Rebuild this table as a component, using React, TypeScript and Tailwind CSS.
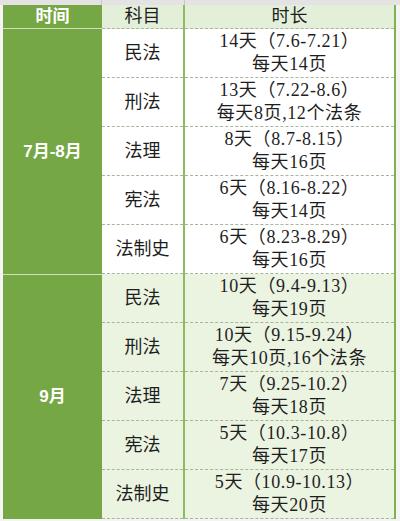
import React from "react";

interface Row {
  subject: string;
  range: string;
  pages: string;
}

interface Group {
  label: string;
  tint: string;
  rows: Row[];
}

const groups: Group[] = [
  {
    label: "7月-8月",
    tint: "bg-white",
    rows: [
      { subject: "民法", range: "14天（7.6-7.21）", pages: "每天14页" },
      { subject: "刑法", range: "13天（7.22-8.6）", pages: "每天8页,12个法条" },
      { subject: "法理", range: "8天（8.7-8.15）", pages: "每天16页" },
      { subject: "宪法", range: "6天（8.16-8.22）", pages: "每天14页" },
      { subject: "法制史", range: "6天（8.23-8.29）", pages: "每天16页" },
    ],
  },
  {
    label: "9月",
    tint: "bg-[#ebf3e1]",
    rows: [
      { subject: "民法", range: "10天（9.4-9.13）", pages: "每天19页" },
      { subject: "刑法", range: "10天（9.15-9.24）", pages: "每天10页,16个法条" },
      { subject: "法理", range: "7天（9.25-10.2）", pages: "每天18页" },
      { subject: "宪法", range: "5天（10.3-10.8）", pages: "每天17页" },
      { subject: "法制史", range: "5天（10.9-10.13）", pages: "每天20页" },
    ],
  },
];

const serif = "font-['Liberation_Serif','Noto_Sans_CJK_SC',serif]";
const sans = "font-['Liberation_Sans','Noto_Sans_CJK_SC',sans-serif]";

const App: React.FC = () => {
  return (
    <div className="w-[400px] h-[521px] overflow-hidden bg-[#f4f4f4]">
      {/* spreadsheet row above */}
      <div className="flex h-[5px] bg-[#e3e3e3]">
        <div className="w-[102px] border-r border-[#c9c9c9]" />
        <div className="w-[83px] border-r border-[#c9c9c9]" />
        <div className="flex-1" />
      </div>

      <div className="flex flex-col w-[396px] pl-[3px]">
        {/* Header */}
        <div className="flex h-[24px]">
          <div
            className={`w-[99px] flex items-center justify-center bg-[#75a845] text-white font-bold text-[17px] border-b border-[#cfe2bd] ${sans}`}
          >
            时间
          </div>
          <div
            className={`w-[81px] flex items-center justify-center bg-[#e4efd9] text-[#1e1e1e] text-[18px] border-b border-dashed border-[#a7b59a] ${serif}`}
          >
            科目
          </div>
          <div className="w-[2px] bg-[#8cbb60]" />
          <div
            className={`flex-1 flex items-center justify-center bg-[#e4efd9] text-[#1e1e1e] text-[18px] border-b border-dashed border-[#a7b59a] ${serif}`}
          >
            时长
          </div>
          <div className="w-[2px] bg-[#7fb150]" />
        </div>

        {/* Groups */}
        {groups.map((group, gi) => (
          <div key={group.label} className="flex">
            <div
              className={`w-[99px] flex items-center justify-center bg-[#75a845] text-white font-bold text-[17px] ${
                gi === 0 ? "" : "border-t border-[#cfe2bd]"
              } ${sans}`}
            >
              {group.label}
            </div>
            <div className="flex-1 flex flex-col">
              {group.rows.map((row) => (
                <div key={row.subject} className={`flex h-[49px] ${group.tint}`}>
                  <div
                    className={`w-[81px] flex items-center justify-center text-[18px] text-[#1e1e1e] border-b border-dashed border-[#a7b59a] ${serif}`}
                  >
                    {row.subject}
                  </div>
                  <div className="w-[2px] bg-[#8cbb60]" />
                  <div
                    className={`flex-1 flex flex-col items-center justify-center text-[18px] leading-[23px] tracking-[0.6px] text-[#1e1e1e] border-b border-dashed border-[#a7b59a] ${serif}`}
                  >
                    <span>{row.range}</span>
                    <span>{row.pages}</span>
                  </div>
                  <div className="w-[2px] bg-[#7fb150]" />
                </div>
              ))}
            </div>
          </div>
        ))}
      </div>
    </div>
  );
};

export default App;
